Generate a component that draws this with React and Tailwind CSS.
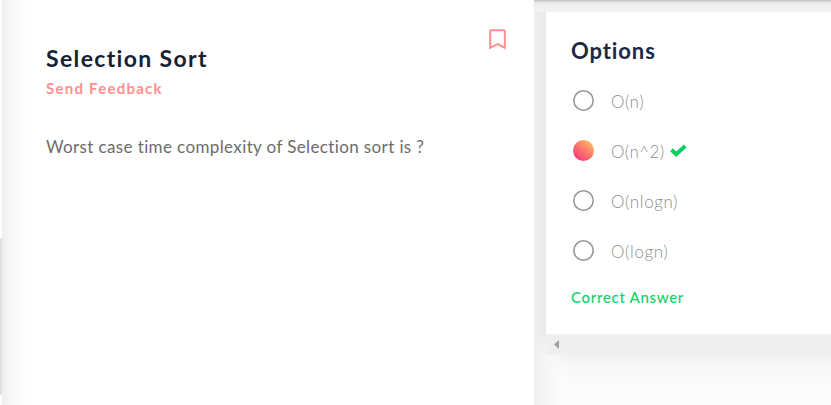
const OPTIONS = [
  { label: 'O(n)', spacing: 'tracking-[0.5px]' },
  { label: 'O(n^2)', spacing: 'tracking-[0.4px]', selected: true },
  { label: 'O(nlogn)', spacing: 'tracking-[0.6px]' },
  { label: 'O(logn)', spacing: 'tracking-[0.6px]' },
];

function Bookmark() {
  return (
    <svg width="17" height="21" viewBox="0 0 17 21" fill="none" stroke="#ff8f8f" strokeWidth="2">
      <path d="M1.2 18.9V2.2Q1.2 1.2 2.2 1.2H14.8Q15.8 1.2 15.8 2.2V18.9L8.5 15.2Z" />
    </svg>
  );
}

function Check() {
  return (
    <svg className="ml-[5.5px]" width="17" height="13" viewBox="0 0 17 13" fill="none" stroke="#07cf63" strokeWidth="4">
      <path d="M1.5 5.8L6.2 10.2L15.2 2" />
    </svg>
  );
}

function Radio({ selected }) {
  return (
    <svg className="ml-[2px]" width="21" height="21" viewBox="0 0 21 21">
      <defs>
        <linearGradient id="radio-fill" x1="0.15" y1="0.9" x2="0.85" y2="0.1">
          <stop offset="0" stopColor="#fb3579" />
          <stop offset="1" stopColor="#fbb862" />
        </linearGradient>
      </defs>
      {selected ? (
        <circle cx="10.5" cy="10.5" r="10.5" fill="url(#radio-fill)" />
      ) : (
        <circle cx="10.5" cy="10.5" r="9.7" fill="none" stroke="#999999" strokeWidth="1.6" />
      )}
    </svg>
  );
}

function Option({ label, spacing, selected }) {
  return (
    <li className="flex h-[50px] items-center">
      <Radio selected={selected} />
      <span className={`ml-[17px] mt-[3px] text-[17px] font-light text-[#8f8f8f] ${spacing}`}>{label}</span>
      {selected && <Check />}
    </li>
  );
}

export default function App() {
  return (
    <div className="flex h-[405px] w-[831px] overflow-hidden bg-[#fbfbfb] font-['Lato','Open_Sans',sans-serif]">
      <div className="flex w-[2px] shrink-0 flex-col bg-white pt-[238px]">
        <div className="h-[157px] bg-[#e1e1e1]" />
      </div>
      <main className="flex w-[532px] shrink-0 justify-between bg-white bg-linear-[90deg,#eeeeee_0px,#f6f6f6_7px,#fbfbfb_15px,#fefefe_24px,#ffffff_32px] pl-[44px] pr-[28px]">
        <div className="pt-[43px] whitespace-nowrap">
          <h1 className="h-[30px] text-[23px] leading-[30px] font-bold tracking-[1.35px] text-[#171f33]">Selection Sort</h1>
          <p className="h-[30px] text-[15px] leading-[30px] font-bold tracking-[1.25px] text-[#ff9090]">Send Feedback</p>
          <p className="mt-[29px] h-[30px] text-[17px] leading-[30px] tracking-[0.38px] text-[#6c6c6c]">
            Worst case time complexity of Selection sort is ?
          </p>
        </div>
        <div className="pt-[29px]">
          <Bookmark />
        </div>
      </main>
      <aside className="flex w-[297px] shrink-0 flex-col bg-linear-[90deg,#efefef_0px,#f5f5f5_10px,#fbfbfb_24px]">
        <div className="h-[12px] shrink-0 bg-linear-[180deg,#c4c4c4_0px,#c9c9c9_1px,#e5e5e5_2px,#eeeeee_4px,#f2f2f2_12px]" />
        <div className="flex h-[343px] shrink-0">
          <div className="w-[12px] shrink-0 bg-linear-[90deg,#efefef_0px,#e9e9e9_12px] [mask-image:linear-gradient(180deg,#000_320px,transparent_343px)]" />
          <div className="flex grow flex-col">
            <section className="h-[322px] bg-white pl-[25px] whitespace-nowrap">
              <h2 className="pt-[24px] text-[22px] leading-[30px] font-bold tracking-[0.9px] text-[#1b2848]">Options</h2>
              <ul className="mt-[9px]">
                {OPTIONS.map((o) => (
                  <Option key={o.label} {...o} />
                ))}
              </ul>
              <p className="mt-[7px] text-[15px] leading-[30px] font-medium tracking-[0.7px] text-[#11d069]">Correct Answer</p>
            </section>
            <div className="flex h-[21px] items-center bg-[#efefef] pl-[8px]">
              <svg width="5" height="9" viewBox="0 0 5 9" fill="#a1a1a1">
                <path d="M5 0V9L0 4.5Z" />
              </svg>
            </div>
          </div>
        </div>
        <div className="ml-[12px] h-[25px] shrink-0 bg-linear-[180deg,#efefef,#f7f7f7_45%,#fbfbfb] [mask-image:linear-gradient(90deg,transparent,#000_24px)]" />
      </aside>
    </div>
  );
}
